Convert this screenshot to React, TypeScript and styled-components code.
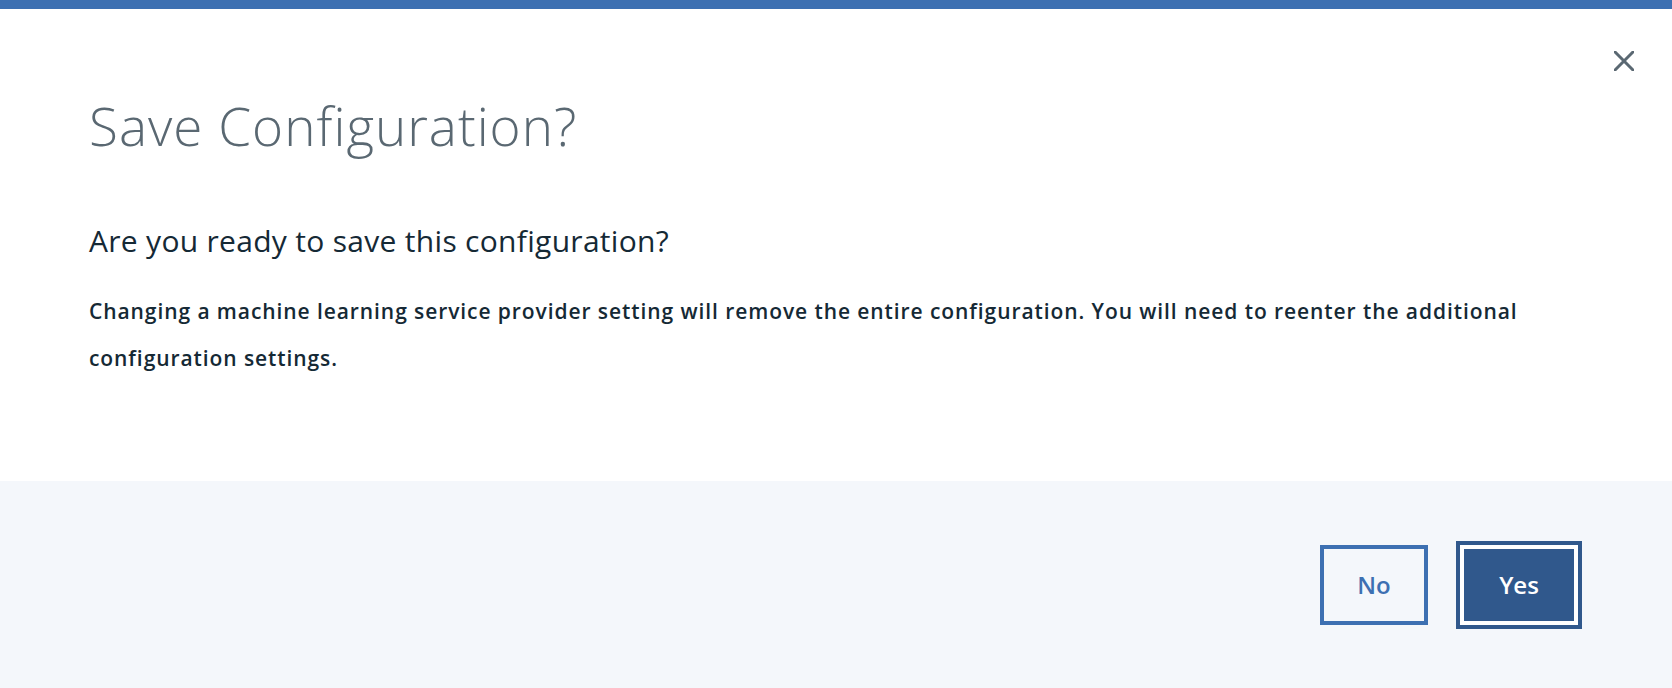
import React from "react";
import styled, { createGlobalStyle } from "styled-components";

const Global = createGlobalStyle`
  html, body { margin: 0; padding: 0; background: #ffffff; }
  body { font-family: "Open Sans", "Noto Sans", sans-serif; }
  #root { height: 688px; }
`;

const Modal = styled.div`
  display: flex;
  flex-direction: column;
  width: 1672px;
  height: 688px;
  background: #ffffff;
  border-top: 9px solid #3d70b2;
  box-sizing: border-box;
`;

const Body = styled.div`
  position: relative;
  flex: 1;
  display: flex;
  flex-direction: column;
  padding: 85px 0 0 89px;
`;

const CloseButton = styled.button`
  position: absolute;
  top: 42px;
  right: 38px;
  width: 20px;
  height: 20px;
  padding: 0;
  border: none;
  background: transparent;
  display: flex;
  align-items: center;
  justify-content: center;
  cursor: pointer;
`;

const Title = styled.h1`
  margin: 0;
  font-family: "Open Sans", sans-serif;
  font-weight: 300;
  font-size: 53px;
  line-height: 64px;
  letter-spacing: 1px;
  color: #5a6872;
`;

const Subtitle = styled.h2`
  margin: 65px 0 0;
  font-family: "Open Sans", sans-serif;
  font-weight: 400;
  font-size: 30px;
  line-height: 36px;
  letter-spacing: 0.3px;
  color: #152935;
`;

const Message = styled.p`
  margin: 29px 0 0;
  max-width: 1490px;
  font-family: "Open Sans", sans-serif;
  font-weight: 600;
  font-size: 21px;
  line-height: 47px;
  letter-spacing: 0.92px;
  color: #152935;
`;

const Footer = styled.div`
  height: 207px;
  flex-shrink: 0;
  background: #f4f7fb;
  display: flex;
  align-items: center;
  justify-content: flex-end;
  gap: 28px;
  padding-right: 90px;
`;

const Button = styled.button<{ $primary?: boolean }>`
  box-sizing: border-box;
  height: ${(p) => (p.$primary ? "88px" : "80px")};
  width: ${(p) => (p.$primary ? "126px" : "108px")};
  border: 4px solid ${(p) => (p.$primary ? "#30588c" : "#3d70b2")};
  background: ${(p) => (p.$primary ? "#30588c" : "transparent")};
  box-shadow: ${(p) => (p.$primary ? "inset 0 0 0 4px #ffffff" : "none")};
  color: ${(p) => (p.$primary ? "#ffffff" : "#3d70b2")};
  font-family: "Open Sans", sans-serif;
  font-weight: 600;
  font-size: 24px;
  display: flex;
  align-items: center;
  justify-content: center;
  cursor: pointer;
  padding: 0;
`;

export default function App() {
  return (
    <>
      <Global />
      <Modal>
        <Body>
          <CloseButton aria-label="Close">
            <svg width="20" height="20" viewBox="0 0 20 20">
              <path d="M1 1 L19 19 M19 1 L1 19" stroke="#5a6872" strokeWidth="3" strokeLinecap="square" />
            </svg>
          </CloseButton>
          <Title>Save Configuration?</Title>
          <Subtitle>Are you ready to save this configuration?</Subtitle>
          <Message>
            Changing a machine learning service provider setting will remove the entire configuration. You will need to reenter the additional configuration settings.
          </Message>
        </Body>
        <Footer>
          <Button>No</Button>
          <Button $primary>Yes</Button>
        </Footer>
      </Modal>
    </>
  );
}
